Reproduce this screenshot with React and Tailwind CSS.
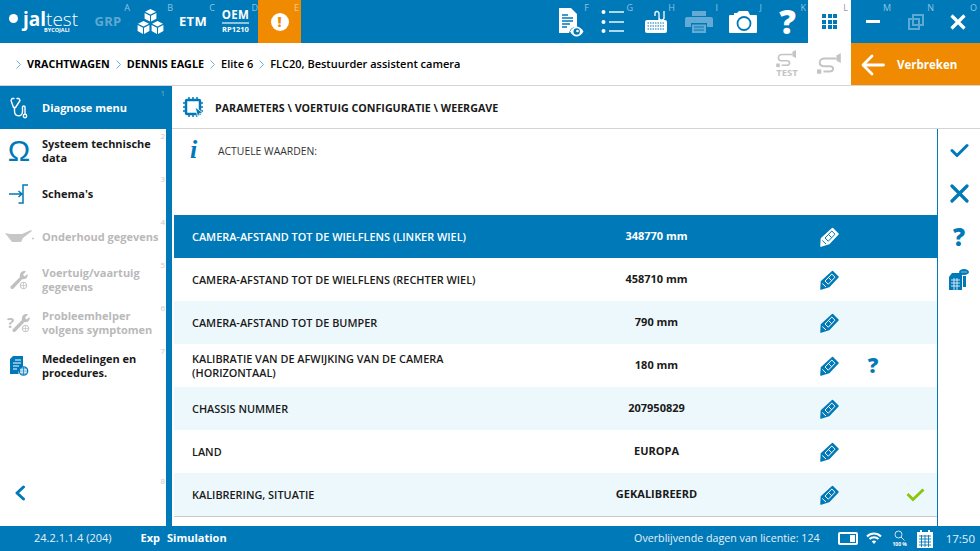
import React from "react";

const BLUE = "#0079b8";

const Letter = ({ c, className = "" }) => (
  <span className={`absolute top-[2px] right-0 text-[9px] leading-[11px] font-normal ${className}`}>{c}</span>
);

const Pencil = ({ color = BLUE, cut = "#fff" }) => (
  <svg width="19" height="20" viewBox="0 0 19 20">
    <path d="M12.500 1.500 18 7 9 16.500 1 19 1.500 11.500Z" fill={color} stroke={color} strokeWidth="1.600" strokeLinejoin="round" />
    <path d="M5 11 11.800 4 15 7.200 8.300 14.200Z" fill="none" stroke={cut} strokeWidth="1" />
    <path d="M8.500 7.500 11.700 10.700M2.300 13.500 6 17" stroke={cut} strokeWidth="1" />
  </svg>
);

const Chevron = () => (
  <svg width="5" height="9" viewBox="0 0 5 9" fill="none" stroke="#6fb2d8" strokeWidth="1" className="shrink-0">
    <path d="M.5 .5 4.500 4.500 .5 8.500" />
  </svg>
);

const topLeft = [
  { w: "w-[42px]", letter: "A", node: <span className="text-[13px] font-bold text-[#5da9d3] tracking-[0.3px]">GRP</span> },
  {
    w: "w-[43px]",
    letter: "B",
    node: (
      <svg width="27" height="27" viewBox="0 0 27 27" fill="#fff">
        <path d="M13.500 1 19 3.800 13.500 6.600 8 3.800Z" />
        <path d="M7.600 5 13 7.800V13.500L7.600 10.700ZM19.400 5 14 7.800V13.500L19.400 10.700Z" />
        <path d="M6.500 13 12 15.800 6.500 18.600 1 15.800ZM20.500 13 26 15.800 20.500 18.600 15 15.800Z" />
        <path d="M.6 17 6 19.800V26L.6 23ZM12.400 17 7 19.800V26L12.400 23ZM14.600 17 20 19.800V26L14.600 23ZM26.400 17 21 19.800V26L26.400 23Z" />
      </svg>
    ),
  },
  { w: "w-[42px]", letter: "C", node: <span className="text-[13px] font-bold text-white tracking-[0.3px]">ETM</span> },
  {
    w: "w-[43px]",
    letter: "D",
    node: (
      <div className="flex flex-col items-center leading-none text-white font-bold">
        <span className="text-[11.500px] leading-[12px] tracking-[0.3px] border-b-2 border-[#8cc4e2] pb-[1px]">OEM</span>
        <span className="text-[7.500px] leading-[11px]">RP1210</span>
      </div>
    ),
  },
];

const docEye = (
  <svg width="26" height="30" viewBox="0 0 26 30" fill="#fff">
    <path d="M1 1H13L19 7V20A7 7 0 0 0 11 26H1Z" />
    <path d="M4 8H10M4 11H15M4 14H15M4 17H12M4 20H9" stroke={BLUE} strokeWidth="1.300" />
    <path d="M12 24.500C14 21 16.500 19.500 18.500 19.500S23.500 21 25.500 24.500C23.500 28 21 29.500 18.500 29.500S14 28 12 24.500Z" />
    <circle cx="18.700" cy="24.500" r="3.200" fill={BLUE} />
    <circle cx="19.500" cy="24" r="1.300" fill="#fff" />
  </svg>
);

const listIcon = (
  <svg width="24" height="26" viewBox="0 0 24 26" fill="#fff">
    <circle cx="2.500" cy="3" r="2" />
    <circle cx="2.500" cy="13" r="2" />
    <circle cx="2.500" cy="22" r="2" />
    <rect x="8" y="2.300" width="15" height="1.400" />
    <rect x="8" y="12.300" width="15" height="1.400" />
    <rect x="8" y="21.300" width="15" height="1.400" />
  </svg>
);

const keyboardIcon = (
  <svg width="23" height="24" viewBox="0 0 23 24" fill="#fff">
    <rect x="0" y="10" width="22" height="13" rx="2" />
    <path d="M14 10V3.500A2 2 0 0 0 10 3.500V6M14 8A2.500 2.500 0 0 0 19 7V1" fill="none" stroke="#fff" strokeWidth="1.300" />
    <path d="M2.500 13H20M2.500 16H20M2.500 19H20" stroke={BLUE} strokeWidth="1.100" strokeDasharray="1.500 1" />
  </svg>
);

const printerIcon = (
  <svg width="28" height="24" viewBox="0 0 28 24" fill="#63abd5">
    <path d="M7 1H21V6H7Z" />
    <path d="M2 7H26A2 2 0 0 1 28 9V17H22V13H6V17H0V9A2 2 0 0 1 2 7Z" />
    <path d="M7 14.500H21V23H7Z" />
    <path d="M9 17H19M9 20H19" stroke={BLUE} strokeWidth="1" />
  </svg>
);

const cameraIcon = (
  <svg width="28" height="23" viewBox="0 0 28 23" fill="#fff">
    <path d="M1 5H5V3H8L10 1H19L21 5H27A1 1 0 0 1 28 6V22A1 1 0 0 1 27 23H1A1 1 0 0 1 0 22V6A1 1 0 0 1 1 5Z" />
    <circle cx="15" cy="13.500" r="6.500" fill="none" stroke={BLUE} strokeWidth="1.800" />
  </svg>
);

const Stethoscope = () => (
  <svg width="18" height="22" viewBox="0 0 18 22" fill="none" stroke="#fff" strokeWidth="1.400" strokeLinecap="round" strokeLinejoin="round">
    <path d="M4 1.500H2L1 3.500 3.500 10.500H5.500L10 3.500 9 1.500H7" />
    <path d="M4.500 10.500V14C4.500 20 12 20.500 12.500 15V10C12.500 8.500 15 8.500 15 10V17" />
    <circle cx="15" cy="19" r="1.700" />
  </svg>
);

const Omega = () => (
  <span className="text-[30px] leading-[30px] font-normal text-[#0079b8]" style={{ fontFamily: '"Liberation Sans", sans-serif' }}>Ω</span>
);

const SchemaIcon = () => (
  <svg width="21" height="20" viewBox="0 0 21 20" fill="none" stroke={BLUE} strokeWidth="1.500">
    <path d="M19 1H14V19H9.500" />
    <path d="M0 10H13M9.500 7 13 10 9.500 13" />
  </svg>
);

const OilCan = () => (
  <svg width="29" height="14" viewBox="0 0 29 14" fill="#c7c7c7">
    <path d="M0 3 5 4H17L26 0 27 1 18 8 16 12H7Z" />
    <circle cx="28" cy="8.500" r="1" />
  </svg>
);

const Wrench = () => (
  <svg width="19" height="20" viewBox="0 0 19 20" fill="none">
    <path d="M16 1.500 13 4.500 14.500 6.500 17.500 4C18.500 7 16 10 12.500 9L3.500 18.500A1.500 1.500 0 0 1 1 16L10 7C9 3 12.500 0 16 1.500Z" fill="#c0c0c0" />
    <circle cx="13.500" cy="15.500" r="3.200" fill="#fff" stroke="#c0c0c0" strokeWidth="1" />
    <path d="M10.500 15.500H16.500M13.500 12.500V18.500" stroke="#c0c0c0" strokeWidth=".7" />
  </svg>
);

const DocGlobe = () => (
  <svg width="19" height="20" viewBox="0 0 19 20">
    <path d="M3 0H13V11.500A6 6 0 0 0 8.500 18H0V3Z" fill={BLUE} />
    <path d="M5 4H11M3 7H11M3 10H9M3 13H7" stroke="#fff" strokeWidth="1" />
    <circle cx="13.500" cy="15" r="4.200" fill="#fff" stroke={BLUE} strokeWidth="1.300" />
    <path d="M9.500 15H17.500M13.500 11V19M10.500 12.800H16.500M10.500 17.200H16.500" stroke={BLUE} strokeWidth=".7" />
  </svg>
);

const sideItems = [
  { n: "2", icon: <Omega />, label: "Systeem technische data" },
  { n: "3", icon: <SchemaIcon />, label: "Schema's" },
  { n: "4", icon: <OilCan />, label: "Onderhoud gegevens", off: true },
  { n: "5", icon: <Wrench />, label: "Voertuig/vaartuig gegevens", off: true },
  {
    n: "6",
    icon: (
      <span className="flex items-center">
        <span className="text-[15px] leading-[15px] font-bold text-[#c0c0c0] -mr-[2px]">?</span>
        <Wrench />
      </span>
    ),
    label: "Probleemhelper volgens symptomen",
    off: true,
  },
  { n: "7", icon: <DocGlobe />, label: "Mededelingen en procedures." },
];

const rows = [
  { name: "CAMERA-AFSTAND TOT DE WIELFLENS (LINKER WIEL)", value: "348770 mm", active: true },
  { name: "CAMERA-AFSTAND TOT DE WIELFLENS (RECHTER WIEL)", value: "458710 mm" },
  { name: "CAMERA-AFSTAND TOT DE BUMPER", value: "790 mm", alt: true },
  { name: "KALIBRATIE VAN DE AFWIJKING VAN DE CAMERA (HORIZONTAAL)", value: "180 mm", help: true },
  { name: "CHASSIS NUMMER", value: "207950829", alt: true },
  { name: "LAND", value: "EUROPA" },
  { name: "KALIBRERING, SITUATIE", value: "GEKALIBREERD", alt: true, ok: true },
];

const Cable = ({ test }) => (
  <div className={`flex flex-col items-center justify-center ${test ? "w-[24px]" : "w-[28px]"}`}>
    <svg width={test ? 22 : 26} height={test ? 18 : 22} viewBox="0 0 24 20" fill="none" stroke="#c4c4c4" strokeWidth="1.800">
      <path d="M18 5H7C1 5 1 12 7 12H12C16 12 16 17 11 17H6" />
      <path d="M18 2 22 0V9L18 7Z" fill="#c4c4c4" stroke="none" />
      <path d="M0 15H4V19H0Z" fill="#c4c4c4" stroke="none" />
    </svg>
    {test && <span className="text-[9.500px] leading-[10px] font-bold text-[#c4c4c4]">TEST</span>}
  </div>
);

export default function App() {
  return (
    <div
      className="w-[980px] h-[551px] flex flex-col bg-white text-[#1a1a1a] overflow-hidden"
      style={{ fontFamily: '"Open Sans", sans-serif' }}
    >
      {/* top bar */}
      <div className="h-[43px] bg-[#0079b8] flex items-stretch text-[#8fc3e0]">
        <div className="w-[88px] pl-[9px] flex items-center">
          <div className="flex items-center text-white relative -mt-[6px]">
            <span className="w-[9px] h-[9px] rounded-full bg-white mr-[5px]"></span>
            <span className="text-[19px] leading-[16px] font-bold">jal</span>
            <span className="text-[19px] leading-[16px] font-light">test</span>
            <span className="absolute left-[35px] top-[16.500px] text-[5.500px] leading-[7px] font-bold whitespace-nowrap">BYCOJALI</span>
          </div>
        </div>
        {topLeft.map((item) => (
          <div key={item.letter} className={`${item.w} relative flex items-center justify-center pr-[2px]`}>
            {item.node}
            <Letter c={item.letter} />
          </div>
        ))}
        <div className="w-[43px] bg-[#f08a00] flex items-center justify-center relative">
          <span className="w-[18px] h-[18px] rounded-full bg-white flex items-center justify-center text-[#f08a00] text-[14px] leading-none font-extrabold">!</span>
          <Letter c="E" className="right-[2px] text-[#f9c98b]" />
        </div>
        <div className="flex-1"></div>
        <div className="w-[42px] flex items-center justify-center relative pl-[3px]">{docEye}<Letter c="F" className="right-[1px]" /></div>
        <div className="w-[45px] flex items-center justify-center relative">{listIcon}<Letter c="G" className="right-[2px]" /></div>
        <div className="w-[42px] flex items-center justify-center relative">{keyboardIcon}<Letter c="H" className="right-[2px]" /></div>
        <div className="w-[43px] flex items-center justify-center relative">{printerIcon}<Letter c="I" className="right-[2px]" /></div>
        <div className="w-[44px] flex items-center justify-center relative pl-[2px]">{cameraIcon}<Letter c="J" className="right-[2px]" /></div>
        <div className="w-[44px] flex items-center justify-center relative pl-[3px]">
          <span className="text-[33px] leading-[33px] font-extrabold text-white">?</span>
          <Letter c="K" className="right-[2px]" />
        </div>
        <div className="w-[43px] bg-white flex items-center justify-center relative">
          <div className="grid grid-cols-3 gap-[1.500px]">
            {[1, 2, 3, 4, 5, 6, 7, 8, 9].map((i) => (
              <span key={i} className="w-[4px] h-[4px] bg-[#0079b8]"></span>
            ))}
          </div>
          <Letter c="L" className="right-[3px] text-[#9a9a9a] text-[7px]" />
        </div>
        <div className="w-[43px] flex items-center justify-center relative">
          <span className="w-[14px] h-[3px] bg-white"></span>
          <Letter c="M" className="right-[3px]" />
        </div>
        <div className="w-[43px] flex items-center justify-center relative">
          <svg width="16" height="16" viewBox="0 0 16 16" fill="none" stroke="#5da9d3" strokeWidth="2">
            <path d="M5 1H15V11H5Z" />
            <path d="M1 5H11V15H1Z" />
          </svg>
          <Letter c="N" className="right-[3px]" />
        </div>
        <div className="w-[43px] flex items-center justify-center relative pr-[2px]">
          <svg width="16" height="16" viewBox="0 0 16 16" stroke="#fff" strokeWidth="3.200">
            <path d="M1.500 1.500 14.500 14.500M14.500 1.500 1.500 14.500" />
          </svg>
          <Letter c="O" className="right-[3px]" />
        </div>
      </div>

      {/* breadcrumb row */}
      <div className="h-[43px] flex items-center border-b border-[#d4d4d4]">
        <div className="flex-1 pl-[16px] pt-[1px] flex items-center gap-[6px] text-[11px] font-semibold text-black">
          <Chevron />
          <span className="font-bold text-[10.700px]">VRACHTWAGEN</span>
          <Chevron />
          <span className="font-bold text-[10.800px]">DENNIS EAGLE</span>
          <Chevron />
          <span>Elite 6</span>
          <Chevron />
          <span>FLC20, Bestuurder assistent camera</span>
        </div>
        <div className="flex items-center gap-[17px] pr-[7px]">
          <Cable test />
          <Cable />
        </div>
        <div className="w-[129px] h-[42px] bg-[#f08a00] flex items-center pl-[10px] pt-[1px] gap-[12px] text-white">
          <svg width="24" height="22" viewBox="0 0 24 22" fill="none" stroke="#fff" strokeWidth="2.800" strokeLinecap="round" strokeLinejoin="round">
            <path d="M22.500 11H3M11 2 2 11 11 20" />
          </svg>
          <span className="text-[11.500px] font-bold">Verbreken</span>
        </div>
      </div>

      {/* body */}
      <div className="flex-1 flex min-h-0">
        {/* sidebar */}
        <div className="w-[172px] flex flex-col">
          <div className="h-[43px] bg-[#0079b8] flex items-center relative text-white">
            <div className="w-[42px] flex justify-center pr-[4px]"><Stethoscope /></div>
            <span className="text-[11px] pt-[1px] font-bold">Diagnose menu</span>
            <span className="absolute top-[1px] right-[7px] text-[8px] leading-[11px] text-[#6fb2d8]">1</span>
          </div>
          <div className="flex-1 flex flex-col border-r-[6px] border-[#0079b8]">
            {sideItems.map((item) => (
              <div key={item.n} className="h-[43px] flex items-center relative">
                <div className="w-[42px] flex justify-center pr-[4px] shrink-0">{item.icon}</div>
                <span className={`text-[11px] leading-[14px] font-bold w-[122px] pt-[1px] ${item.off ? "text-[#b9b9b9]" : "text-[#1a1a1a]"}`}>
                  {item.label}
                </span>
                <span className="absolute top-[1px] right-[1px] text-[8px] leading-[11px] text-[#c9c9c9]">{item.n}</span>
              </div>
            ))}
            <div className="flex-1"></div>
            <div className="h-[53px] flex items-start pt-[12px] pl-[14px] relative">
              <svg width="12" height="16" viewBox="0 0 12 16" fill="none" stroke={BLUE} strokeWidth="3" strokeLinecap="round" strokeLinejoin="round">
                <path d="M9.500 2 3 8 9.500 14" />
              </svg>
              <span className="absolute top-[2px] right-[1px] text-[8px] leading-[11px] text-[#c9c9c9]">8</span>
            </div>
          </div>
        </div>

        {/* main */}
        <div className="flex-1 flex flex-col min-w-0">
          <div className="h-[43px] flex items-center border-b border-[#d4d4d4] shrink-0">
            <div className="w-[43px] flex justify-center">
              <svg width="21" height="21" viewBox="0 0 21 21" fill="none" stroke={BLUE} strokeWidth="1.500">
                <rect x="3" y="3" width="14" height="14" rx="1" strokeWidth="2.500" />
                <path d="M6 0V3M10 0V3M14 0V3M6 17V20M10 17V20M14 17V20M0 6H3M0 10H3M0 14H3M17 6H20M17 10H20M17 14H20" />
                <path d="M12 10 20 16 16.500 16.500 15 20.500Z" fill={BLUE} stroke="#fff" strokeWidth=".8" />
              </svg>
            </div>
            <span className="text-[10.700px] pt-[3px] font-bold text-[#1a1a1a]">PARAMETERS \ VOERTUIG CONFIGURATIE \ WEERGAVE</span>
          </div>
          <div className="flex-1 flex min-h-0">
            <div className="flex-1 flex flex-col pl-[2px] border-r border-[#0079b8] min-w-0">
              <div className="h-[86px] flex items-start pl-[16px] pt-[9px] shrink-0">
                <span className="w-[11px] text-[26px] leading-[24px] font-bold italic text-[#0079b8]" style={{ fontFamily: '"Liberation Serif", serif' }}>i</span>
                <span className="ml-[17px] mt-[6px] text-[10.400px] leading-[14px] text-[#333]">ACTUELE WAARDEN:</span>
              </div>
              <div className="border-b border-[#c9c9c9] mb-[9px]">
                {rows.map((row) => (
                  <div
                    key={row.name}
                    className={`h-[43px] flex items-center ${row.active ? "bg-[#0079b8] text-white" : row.alt ? "bg-[#edf8fd]" : "bg-white"}`}
                  >
                    <div className="w-[320px] pl-[18px] pr-[10px] text-[10.900px] leading-[14px] font-semibold">{row.name}</div>
                    <div className="w-[325px] text-center text-[11px] font-bold">{row.value}</div>
                    <div className="w-[20px] flex justify-center"><Pencil color={row.active ? "#fff" : BLUE} cut={row.active ? BLUE : "#fff"} /></div>
                    <div className="w-[68px] flex justify-center">
                      {row.help && <span className="text-[21px] leading-[21px] font-extrabold text-[#0079b8]">?</span>}
                    </div>
                    <div className="w-[17px] flex justify-center">
                      {row.ok && (
                        <svg width="19" height="14" viewBox="0 0 19 14" fill="none" stroke="#8cc511" strokeWidth="3" className="shrink-0">
                          <path d="M1.500 6 7 11.500 17.500 1.500" />
                        </svg>
                      )}
                    </div>
                  </div>
                ))}
              </div>
            </div>
            {/* right rail */}
            <div className="w-[42px] shrink-0 flex flex-col items-center">
              <div className="h-[43px] flex items-center justify-center">
                <svg width="19" height="15" viewBox="0 0 19 15" fill="none" stroke={BLUE} strokeWidth="3" strokeLinecap="round" strokeLinejoin="round">
                  <path d="M2 7.500 7 12.500 17 2.500" />
                </svg>
              </div>
              <div className="h-[43px] flex items-center justify-center">
                <svg width="19" height="19" viewBox="0 0 19 19" fill="none" stroke={BLUE} strokeWidth="3.200" strokeLinecap="round">
                  <path d="M2 2 17 17M17 2 2 17" />
                </svg>
              </div>
              <div className="h-[43px] flex items-center justify-center text-[24px] leading-[24px] font-extrabold text-[#0079b8]">?</div>
              <div className="h-[43px] flex items-center justify-center">
                <svg width="20" height="22" viewBox="0 0 20 22" fill={BLUE}>
                  <path d="M0 8 3 4H13V21H0Z" />
                  <path d="M14 7H17V18H14Z" />
                  <path d="M2 11H11M2 14H11M2 17H11M5 9V21M8 9V21" stroke="#fff" strokeWidth=".8" />
                  <ellipse cx="15" cy="3" rx="5" ry="3" />
                  <path d="M12.500 3H13.500M14.500 3H15.500M16.500 3H17.500" stroke="#fff" strokeWidth="1" />
                </svg>
              </div>
            </div>
          </div>
        </div>
      </div>

      {/* status bar */}
      <div className="h-[25px] bg-[#0079b8] flex items-center text-white shrink-0">
        <span className="ml-[34px] text-[11px] font-normal text-[#e4f2fa]">24.2.1.1.4 (204)</span>
        <span className="ml-[29px] text-[11px] font-bold">Exp</span>
        <span className="ml-[7px] text-[11px] font-bold">Simulation</span>
        <div className="flex-1"></div>
        <span className="text-[10.700px] text-[#e4f2fa]">Overblijvende dagen van licentie: 124</span>
        <div className="ml-[18px] w-[20px] h-[13px] border-2 border-white rounded-[2px] flex justify-end p-[1px]">
          <span className="w-[5px] bg-white"></span>
        </div>
        <svg className="ml-[8px]" width="16" height="13" viewBox="0 0 16 13" fill="none" stroke="#fff" strokeWidth="2">
          <path d="M1 4.500C5 .5 11 .5 15 4.500M3.500 7C6 4.500 10 4.500 12.500 7" />
          <path d="M5.800 9.500C7 8.300 9 8.300 10.200 9.500L8 12Z" fill="#fff" stroke="none" />
        </svg>
        <div className="ml-[9px] w-[18px] flex flex-col items-center">
          <svg width="11" height="11" viewBox="0 0 11 11" fill="none" stroke="#cfe6f3" strokeWidth="1">
            <circle cx="4.500" cy="4.500" r="3.500" />
            <path d="M7 7 10.500 10.500" />
          </svg>
          <span className="text-[5px] leading-[6px] font-bold">100 %</span>
        </div>
        <svg className="ml-[8px]" width="16" height="18" viewBox="0 0 16 18" fill="#fff">
          <path d="M0 2H3V0H5V2H11V0H13V2H16V18H0Z" />
          <path d="M2 6H14M2 9H14M2 12H14M2 15H14M4.500 5V17M8 5V17M11.500 5V17" stroke={BLUE} strokeWidth=".9" />
        </svg>
        <span className="ml-[13px] mr-[5px] text-[11.500px] text-[#e4f2fa]">17:50</span>
      </div>
    </div>
  );
}
